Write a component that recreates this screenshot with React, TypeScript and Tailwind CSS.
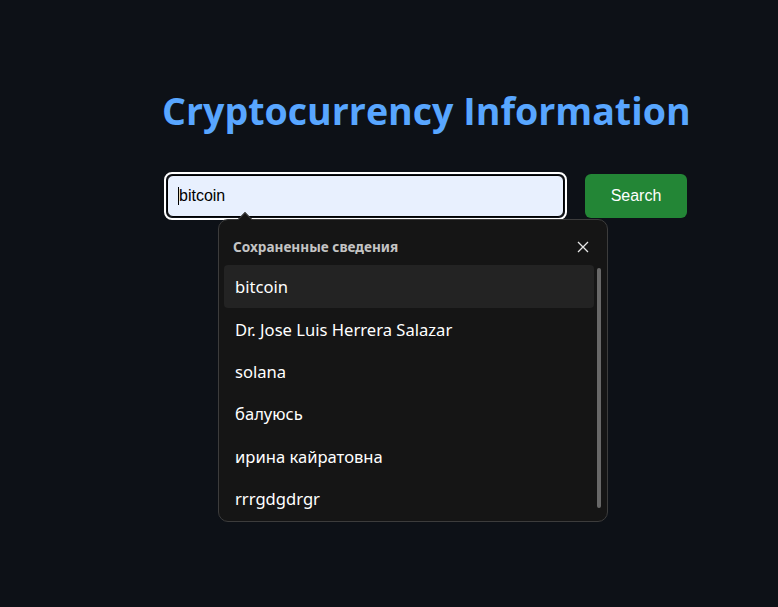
import React from 'react';

const saved = [
  'bitcoin',
  'Dr. Jose Luis Herrera Salazar',
  'solana',
  'балуюсь',
  'ирина кайратовна',
  'rrrgdgdrgr',
];

export default function App() {
  return (
    <div className="min-h-screen w-full bg-[#0d1117] font-['Open_Sans',sans-serif]">
      <div className="pl-[162px] pt-[84px]">
        <h1 className="text-[37.6px] font-bold leading-[54px] text-[#58a6ff]">
          Cryptocurrency Information
        </h1>

        <div className="mt-[34px] flex items-center gap-[18px] pl-[2px]">
          <div className="relative">
            <div className="w-[403px] h-[48px] rounded-[8px] border-2 border-white p-px">
              <div className="h-full w-full rounded-[6px] border border-black bg-[#e8f0fe] flex items-center pl-[10px]">
                <span className="font-['Liberation_Sans',sans-serif] text-[16px] text-black border-l border-black leading-[18px]">
                  bitcoin
                </span>
              </div>
            </div>

            {/* autofill popup */}
            <div className="absolute left-[54px] top-[47px] w-[390px] h-[303px] rounded-[10px] border border-[#3c3c3c] bg-[#151515] z-10">
              <div className="absolute -top-[8px] left-[16px] w-[20px] h-[8px] overflow-hidden">
                <div className="mx-auto mt-[3px] h-[14px] w-[14px] rotate-45 border border-[#3c3c3c] bg-[#151515]" />
              </div>
              <div className="flex items-center justify-between pl-[14px] pr-[18px] pt-[17px] pb-[8px]">
                <span className="font-['Noto_Sans',sans-serif] text-[13.6px] font-bold text-[#c4c4c4]">
                  Сохраненные сведения
                </span>
                <svg width="12" height="12" viewBox="0 0 12 12" className="text-[#e6e6e6]">
                  <path d="M1 1L11 11M11 1L1 11" stroke="currentColor" strokeWidth="1.3" />
                </svg>
              </div>
              <div className="flex pl-[5px] pr-[6px]">
                <div className="flex-1 flex flex-col">
                  {saved.map((s, i) => (
                    <div
                      key={s}
                      className={`h-[42.4px] flex items-center pl-[11px] pt-[2px] rounded-[4px] text-[16.6px] text-white font-['Noto_Sans',sans-serif] ${
                        i === 0 ? 'bg-[#232323]' : ''
                      }`}
                    >
                      {s}
                    </div>
                  ))}
                </div>
                <div className="w-[4px] ml-[3px] mt-[3px] h-[240px] rounded-full bg-[#686868]" />
              </div>
            </div>
          </div>

          <button className="w-[102px] h-[44px] rounded-[6px] bg-[#238636] text-white text-[16px] font-['Liberation_Sans',sans-serif]">
            Search
          </button>
        </div>
      </div>
    </div>
  );
}
